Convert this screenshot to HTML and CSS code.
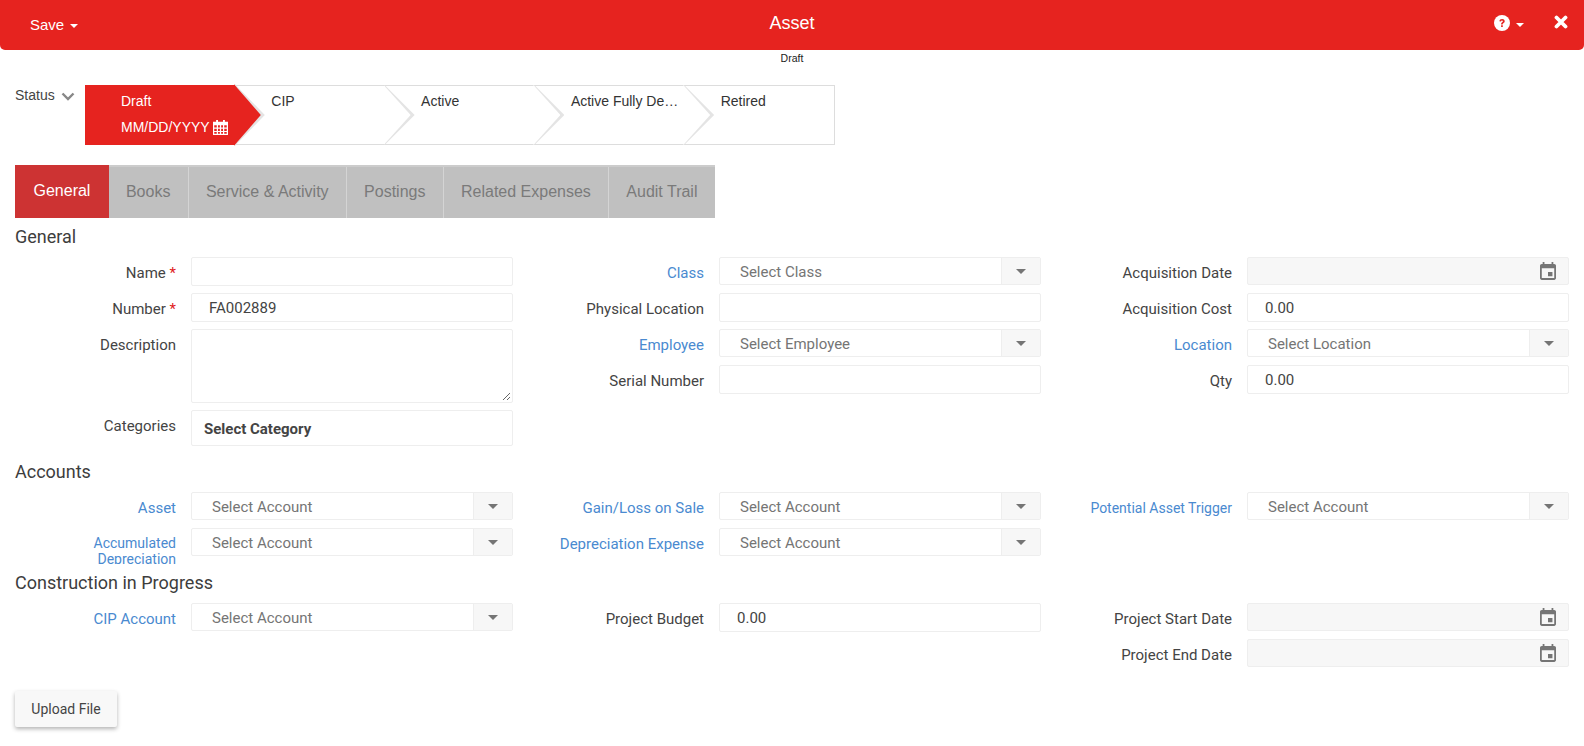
FILE: index.html
```html
<!DOCTYPE html>
<html lang="en">
<head>
<meta charset="utf-8">
<title>Asset</title>
<link rel="stylesheet" href="styles.css">
</head>
<body>
<header class="topbar">
  <div class="save">Save <span class="caret"></span></div>
  <div class="title">Asset</div>
  <div class="top-actions">
    <span class="help"><svg class="help-icon" viewBox="0 0 16 16" width="16" height="16"><circle cx="8" cy="8" r="8" fill="#fff"/><path d="M5.4 6.2C5.5 4.8 6.6 4 8.1 4c1.5 0 2.6.9 2.6 2.2 0 1-.6 1.5-1.3 2-.5.3-.7.6-.7 1.2H7.1c0-1 .3-1.6 1-2.1.5-.3.8-.6.8-1 0-.5-.4-.8-.9-.8-.6 0-.9.3-1 .9zM7.1 10.300h1.700v1.800H7.100z" fill="#e6231f"/></svg><span class="caret"></span></span>
    <svg class="close-icon" viewBox="0 0 14 14" width="14" height="14"><path d="M2.500 2.500l9 9M11.500 2.500l-9 9" stroke="#fff" stroke-width="3.800" stroke-linecap="round"/></svg>
  </div>
</header>
<div class="state-label">Draft</div>

<div class="status-row">
  <div class="status-toggle">Status <svg class="chev" viewBox="0 0 14 9" width="14" height="9"><path d="M1.500 1.500L7 7l5.500-5.500" fill="none" stroke="#888" stroke-width="2.400"/></svg></div>
  <div class="steps">
    <div class="step step-active">
      <div class="step-name">Draft</div>
      <div class="step-date">MM/DD/YYYY <svg class="cal-fa" viewBox="1 1 12 13" width="15" height="15" preserveAspectRatio="none"><path fill="#fff" fill-rule="evenodd" d="M1 2.500h2.500V1h1.500v1.500h4V1h1.500v1.500H13V14H1zM2 5.500v2h2v-2zm3 0v2h1.500v-2zm2.500 0v2H9v-2zm2.500 0v2h2v-2zM2 8.500v2h2v-2zm3 0v2h1.500v-2zm2.500 0v2H9v-2zm2.500 0v2h2v-2zM2 11.500V13h2v-1.500zm3 0V13h1.500v-1.500zm2.500 0V13H9v-1.500zm2.500 0V13h2v-1.500z"/></svg></div>
    </div>
    <div class="step"><div class="step-name">CIP</div></div>
    <div class="step"><div class="step-name">Active</div></div>
    <div class="step"><div class="step-name">Active Fully De…</div></div>
    <div class="step step-last"><div class="step-name">Retired</div></div>
  </div>
</div>

<nav class="tabs">
  <div class="tab tab-on">General</div>
  <div class="tab">Books</div>
  <div class="tab">Service &amp; Activity</div>
  <div class="tab">Postings</div>
  <div class="tab">Related Expenses</div>
  <div class="tab">Audit Trail</div>
</nav>

<main class="content">
  <h2 class="heading">General</h2>
  <section class="grid">
    <div class="col">
      <div class="row"><label class="lab">Name <span class="req">*</span></label><div class="inp"></div></div>
      <div class="row"><label class="lab">Number <span class="req">*</span></label><div class="inp inp-num">FA002889</div></div>
      <div class="row"><label class="lab">Description</label><div class="inp area"><svg class="grip" viewBox="0 0 9 9" width="9" height="9"><path d="M1 8l7-7M5 8l3-3" stroke="#666" stroke-width="1"/></svg></div></div>
      <div class="row"><label class="lab">Categories</label><div class="inp cat">Select Category</div></div>
    </div>
    <div class="col">
      <div class="row"><label class="lab link">Class</label><div class="sel"><span class="sel-text">Select Class</span><span class="sel-btn"><span class="tri"></span></span></div></div>
      <div class="row"><label class="lab">Physical Location</label><div class="inp"></div></div>
      <div class="row"><label class="lab link">Employee</label><div class="sel"><span class="sel-text">Select Employee</span><span class="sel-btn"><span class="tri"></span></span></div></div>
      <div class="row"><label class="lab">Serial Number</label><div class="inp"></div></div>
    </div>
    <div class="col">
      <div class="row"><label class="lab">Acquisition Date</label><div class="date"><svg class="cal" viewBox="3 1 18 20" width="16" height="18"><path fill="#757575" d="M17 12h-5v5h5v-5zM16 1v2H8V1H6v2H5c-1.110 0-1.990.9-1.990 2L3 19c0 1.100.89 2 2 2h14c1.100 0 2-.9 2-2V5c0-1.100-.9-2-2-2h-1V1h-2zm3 18H5V8h14v11z"/></svg></div></div>
      <div class="row"><label class="lab">Acquisition Cost</label><div class="inp inp-val">0.00</div></div>
      <div class="row"><label class="lab link">Location</label><div class="sel"><span class="sel-text">Select Location</span><span class="sel-btn"><span class="tri"></span></span></div></div>
      <div class="row"><label class="lab">Qty</label><div class="inp inp-val">0.00</div></div>
    </div>
  </section>

  <h2 class="heading heading-accounts">Accounts</h2>
  <section class="grid">
    <div class="col">
      <div class="row"><label class="lab link">Asset</label><div class="sel"><span class="sel-text">Select Account</span><span class="sel-btn"><span class="tri"></span></span></div></div>
      <div class="row"><label class="lab link lab-wrap">Accumulated Depreciation</label><div class="sel"><span class="sel-text">Select Account</span><span class="sel-btn"><span class="tri"></span></span></div></div>
    </div>
    <div class="col">
      <div class="row"><label class="lab link">Gain/Loss on Sale</label><div class="sel"><span class="sel-text">Select Account</span><span class="sel-btn"><span class="tri"></span></span></div></div>
      <div class="row"><label class="lab link">Depreciation Expense</label><div class="sel"><span class="sel-text">Select Account</span><span class="sel-btn"><span class="tri"></span></span></div></div>
    </div>
    <div class="col">
      <div class="row"><label class="lab link lab-small">Potential Asset Trigger</label><div class="sel"><span class="sel-text">Select Account</span><span class="sel-btn"><span class="tri"></span></span></div></div>
    </div>
  </section>

  <h2 class="heading heading-cip">Construction in Progress</h2>
  <section class="grid">
    <div class="col">
      <div class="row"><label class="lab link">CIP Account</label><div class="sel"><span class="sel-text">Select Account</span><span class="sel-btn"><span class="tri"></span></span></div></div>
    </div>
    <div class="col">
      <div class="row"><label class="lab">Project Budget</label><div class="inp inp-val">0.00</div></div>
    </div>
    <div class="col">
      <div class="row"><label class="lab">Project Start Date</label><div class="date"><svg class="cal" viewBox="3 1 18 20" width="16" height="18"><path fill="#757575" d="M17 12h-5v5h5v-5zM16 1v2H8V1H6v2H5c-1.110 0-1.990.9-1.990 2L3 19c0 1.100.89 2 2 2h14c1.100 0 2-.9 2-2V5c0-1.100-.9-2-2-2h-1V1h-2zm3 18H5V8h14v11z"/></svg></div></div>
      <div class="row"><label class="lab">Project End Date</label><div class="date"><svg class="cal" viewBox="3 1 18 20" width="16" height="18"><path fill="#757575" d="M17 12h-5v5h5v-5zM16 1v2H8V1H6v2H5c-1.110 0-1.990.9-1.990 2L3 19c0 1.100.89 2 2 2h14c1.100 0 2-.9 2-2V5c0-1.100-.9-2-2-2h-1V1h-2zm3 18H5V8h14v11z"/></svg></div></div>
    </div>
  </section>

  <button class="upload" type="button">Upload File</button>
</main>
</body>
</html>
```
FILE: styles.css
```css
* { box-sizing: border-box; }
html, body { margin: 0; padding: 0; }
body {
  background: #fff;
  color: #3d3d3d;
  font-family: "Liberation Sans", Arial, sans-serif;
  font-size: 14px;
  height: 746px;
  overflow: hidden;
}
.topbar {
  height: 50px;
  background: #e6231f;
  border-radius: 0 0 5px 5px;
  color: #fff;
  display: grid;
  grid-template-columns: 1fr auto 1fr;
  align-items: start;
  padding: 0 16px;
}
.save { font-size: 15px; line-height: 16px; padding: 17px 0 0 14px; }
.title { font-size: 18px; line-height: 20px; padding-top: 13px; }
.caret {
  display: inline-block;
  width: 0; height: 0;
  border-left: 4px solid transparent;
  border-right: 4px solid transparent;
  border-top: 4px solid #fff;
  vertical-align: 2px;
  margin-left: 2px;
}
.top-actions { justify-self: end; display: flex; align-items: flex-start; gap: 30px; padding-top: 15px; }
.help { display: flex; align-items: center; gap: 6px; }
.help .caret { margin: 4px 0 0; }
.help-icon, .close-icon { display: block; }
.close-icon { margin-top: 0; }
.state-label { color: #222; font-size: 10.500px; line-height: 12px; text-align: center; margin-top: 2px; }
.status-row { display: flex; align-items: flex-start; padding-left: 15px; margin-top: 21px; height: 59px; }
.status-toggle { width: 70px; line-height: 18px; font-size: 14px; color: #444; padding-top: 1px; white-space: nowrap; }
.chev { margin-left: 2px; vertical-align: -1px; }
.steps { display: flex; width: 750px; height: 60px; border: 1px solid #ddd; border-left: 0; }
.step { position: relative; width: 150px; padding: 5px 0 0 36.500px; font-size: 14px; line-height: 20px; color: #333; white-space: nowrap; }
.step-last { width: 150px; }
.step::after, .step::before {
  content: "";
  position: absolute;
  top: -1px;
  bottom: -1px;
  clip-path: polygon(0 0, 100% 50%, 0 100%);
}
.step::after { left: 100%; width: 30px; background: #e4e4e4; z-index: 1; }
.step::before { left: 100%; margin-left: -1px; width: 27px; background: #fff; z-index: 2; }
.step-last::after, .step-last::before { display: none; }
.step-active { background: #e6231f; color: #fff; margin-top: -1px; margin-bottom: -1px; padding-top: 6px; padding-left: 36px; }
.step-active::before { background: #e6231f; }
.step-date { margin-top: 6px; display: flex; align-items: center; gap: 3px; }
.cal-fa { display: block; }
.tabs { display: flex; width: 700px; margin: 21px 0 0 15px; background: #c0c0c0; border-top: 2px solid #ccc; box-sizing: content-box; height: 51px; }
.tab { font-size: 16px; line-height: 49px; color: #7a7a7a; padding: 0 17.500px 0 17px; border-right: 1px solid #d4d4d4; white-space: nowrap; }
.tab:last-child { border-right: 0; }
.tab-on { background: #cd3333; color: #fff; margin-top: -2px; height: 53px; line-height: 51px; border-right: 0; padding: 0 18.500px; }
.content { padding: 0 15px; }
.heading { font: 400 18px/20px "Roboto", sans-serif; color: #3d3d3d; margin: 9px 0 0; }
.heading-accounts { margin-top: 16px; }
.heading-cip { margin-top: 16px; }
.grid { display: grid; grid-template-columns: repeat(3, 322px); column-gap: 206px; margin-left: 176px; margin-top: 10px; }
.col { display: flex; flex-direction: column; gap: 7px; }
.row { position: relative; min-height: 29px; }
.lab {
  position: absolute;
  right: 100%;
  margin-right: 15px;
  top: 8px;
  width: 176px;
  text-align: right;
  font: 400 15px/17px "Roboto", sans-serif;
  color: #444;
  white-space: nowrap;
}
.lab-small { font-size: 14px; }
.lab-wrap { white-space: normal; font-size: 14px; line-height: 16px; top: 7px; height: 29px; overflow: hidden; margin-right: 15px; width: 100px; }
.link { color: #4a8ad0; }
.req { color: #e02020; }
.inp, .sel, .date { border: 1px solid #eee; border-radius: 2px; height: 29px; background: #fff; font: 400 15px/29px "Roboto", sans-serif; }
.inp-num { padding-left: 17px; color: #444; }
.inp-val { padding-left: 17px; color: #444; }
.area { height: 74px; position: relative; }
.grip { position: absolute; right: 1px; bottom: 1px; }
.cat { height: 36px; font-weight: 700; line-height: 36px; padding-left: 12px; color: #444; }
.sel { display: flex; height: 28px; }
.sel-text { flex: 1; padding-left: 20px; color: #757575; }
.sel-btn { width: 39px; background: #f7f7f7; border-left: 1px solid #eee; display: flex; align-items: center; justify-content: center; }
.tri { width: 0; height: 0; border-left: 5px solid transparent; border-right: 5px solid transparent; border-top: 5px solid #757575; }
.date { background: #f7f7f7; display: flex; align-items: center; justify-content: flex-end; padding-right: 12px; height: 28px; }
.cal { display: block; }
.upload {
  display: block;
  margin-top: 23px;
  width: 102px;
  height: 36px;
  border: 0;
  border-radius: 2px;
  background: #f8f8f8;
  box-shadow: 0 2px 4px rgba(0,0,0,.3);
  color: #444;
  font: 400 14px "Roboto", sans-serif;
  padding: 0;
}
```
